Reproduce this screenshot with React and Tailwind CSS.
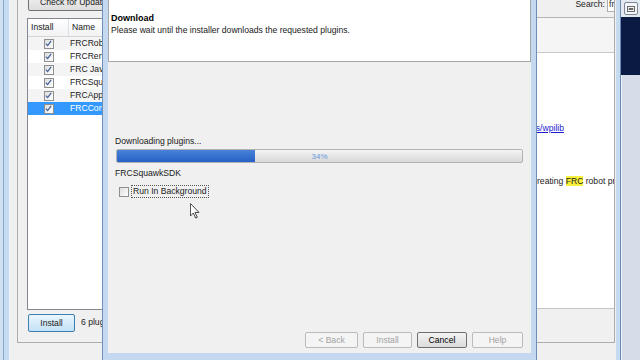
import React from 'react';

const plugins = [
  { name: 'FRCRobotBuilder' },
  { name: 'FRCRenameProject' },
  { name: 'FRC JavaDocs' },
  { name: 'FRCSquawkSDK' },
  { name: 'FRCApplications' },
  { name: 'FRCCompilerTools', selected: true },
];

function CheckBox({ checked }) {
  return (
    <span className="w-[10px] h-[10px] border border-[#8e8f8f] bg-gradient-to-br from-[#dedede] to-white flex items-center justify-center">
      {checked && (
        <svg viewBox="0 0 8 8" className="w-[7px] h-[7px]">
          <path d="M1 4.2 L3 6.5 L7 1" stroke="#3d5a98" strokeWidth="1.3" fill="none" />
        </svg>
      )}
    </span>
  );
}

function DialogButton({ label, disabled, width }) {
  return (
    <div
      className={
        'h-[16px] rounded-[2px] border flex items-center justify-center text-[8.6px] ' +
        width +
        (disabled
          ? ' border-[#b8bcbf] bg-[#f4f4f4] text-[#a3a3a3]'
          : ' border-[#707070] bg-gradient-to-b from-[#f3f3f3] to-[#dcdcdc] text-black')
      }
    >
      {label}
    </div>
  );
}

export default function App() {
  return (
    <div className="relative w-[640px] h-[360px] overflow-hidden bg-[#f0f0f0] text-[#1a1a1a] font-['Liberation_Sans',Arial,sans-serif] text-[8.6px] leading-[11px]">
      {/* background Plugins window */}
      <div className="flex h-full">
        {/* left frame */}
        <div className="w-[10px] flex shrink-0">
          <div className="w-[3px] bg-[#cfe0f2]" />
          <div className="w-px bg-[#8aa6c8]" />
          <div className="w-[5px] bg-[#c6daf0]" />
          <div className="w-px bg-[#eef3f8]" />
        </div>

        <div className="w-[606px] shrink-0 pl-[7px] pr-px pb-[17px]">
          <div className="h-full border-x border-b border-[#adadad] flex flex-col">
            {/* top bar */}
            <div className="h-[17px] flex justify-between items-start">
              <div className="ml-[10px] -mt-[6px] h-[17px] px-[11px] rounded-[2px] border border-[#707070] bg-gradient-to-b from-[#f2f2f2] to-[#dddddd] flex items-end pb-[2px] whitespace-nowrap">
                Check for Updates
              </div>
              <div className="flex items-start">
                <span className="mt-[-1px] mr-[2px]">Search:</span>
                <div className="w-[7px] h-[13px] -mt-[1px] border-l border-b border-[#abadb3] bg-white overflow-hidden pl-[1px]">
                  fr
                </div>
              </div>
            </div>

            <div className="flex-1 flex">
              {/* plugin list column */}
              <div className="w-[300px] pl-[9px] flex flex-col">
                <div className="mt-px flex-1 border border-[#828790] bg-white">
                  <div className="h-[18px] flex border-b border-[#d5d5d5] bg-gradient-to-b from-white to-[#f1f2f4]">
                    <div className="w-[41px] border-r border-[#dedfe2] pl-[3px] flex items-center">Install</div>
                    <div className="pl-[3px] flex items-center">Name</div>
                  </div>
                  {plugins.map((p, i) => (
                    <div
                      key={p.name}
                      className={
                        'h-[13px] flex items-center ' +
                        (p.selected ? 'bg-[#3399ff] text-white' : i % 2 === 0 ? 'bg-[#f4f4f4]' : 'bg-white')
                      }
                    >
                      <div className="w-[41px] flex justify-center">
                        <CheckBox checked />
                      </div>
                      <div className="pl-px whitespace-nowrap">{p.name}</div>
                    </div>
                  ))}
                </div>
                <div className="h-[32px] flex items-start pt-[4px]">
                  <div className="ml-px w-[47px] h-[18px] rounded-[2px] border border-[#3c7fb1] bg-gradient-to-b from-[#eaf6fd] to-[#c2e1f7] flex items-center justify-center">
                    Install
                  </div>
                  <span className="ml-[6px] mt-[3px] whitespace-nowrap">6 plugins selected, 16 MB</span>
                </div>
              </div>

              {/* details column */}
              <div className="flex-1 flex flex-col border-t border-[#b5b5b5] overflow-hidden">
                <div className="h-[35px] bg-[#f5f5f5] border-b border-[#c8c8c8]" />
                <div className="flex-1 bg-white pt-[70px]">
                  <div className="flex justify-end pr-[50px] whitespace-nowrap">
                    <span className="text-[#1b1bd0] underline">http://firstforge.wpi.edu/sf/projects/wpilib</span>
                  </div>
                  <div className="mt-[42px] flex whitespace-nowrap">
                    <span className="w-[219px] shrink-0 text-right overflow-hidden">A plugin with templates for c</span>
                    <span>
                      reating <span className="bg-[#f7f03c]">FRC</span> robot projects
                    </span>
                  </div>
                </div>
                <div className="h-[34px] bg-[#f0f0f0] border-t border-[#c6c6c6]" />
              </div>
            </div>
          </div>
        </div>

        {/* right frame */}
        <div className="w-[4px] shrink-0 bg-[#c6dbf0]" />
        <div className="w-px shrink-0 bg-[#6b8bb5]" />

        {/* side strip */}
        <div className="w-[19px] shrink-0 flex flex-col bg-[#d6dde8]">
          <div className="h-[17px] bg-[#e4e9f0] flex items-center justify-center">
            <div className="w-[14px] h-[13px] rounded-[2px] border border-[#7c8797] bg-[#f3f5f8] flex items-center justify-center">
              <svg viewBox="0 0 10 8" className="w-[8px] h-[6px]">
                <rect x="0.5" y="0.5" width="9" height="7" fill="none" stroke="#3c3c3c" />
                <rect x="2" y="3" width="6" height="2" fill="#3c3c3c" />
              </svg>
            </div>
          </div>
          <div className="h-[58px] bg-[#0b1a42]" />
          <div className="flex-1 border-l border-[#eef2f7]" />
        </div>
      </div>

      {/* Download dialog */}
      <div className="absolute left-[102px] top-0 w-[435px] h-[360px] bg-[#c4d9ef] border-x border-[#6d8fb8] px-[5px] pb-[7px] flex flex-col">
        <div className="h-[62px] bg-white border-x border-b border-[#a7a7a7] pl-[2px] pt-[13px]">
          <div className="font-bold text-[9px] leading-[11px] text-black">Download</div>
          <div className="leading-[12px]">Please wait until the installer downloads the requested plugins.</div>
        </div>
        <div className="flex-1 bg-[#f0f0f0] flex flex-col pl-[7px] pr-[8px] pb-[5px]">
          <div className="mt-[74px]">Downloading plugins...</div>
          <div className="ml-px mt-[2px] h-[14px] rounded-[2px] border border-[#b2b2b2] bg-gradient-to-b from-[#f4f4f4] to-[#d9d9d9] relative overflow-hidden">
            <div className="h-full w-[34%] bg-gradient-to-b from-[#4a82d8] to-[#2561c6]" />
            <div className="absolute inset-0 flex items-center justify-center text-[8px] text-[#6a98dc]">34%</div>
          </div>
          <div className="mt-[5px]">FRCSquawkSDK</div>
          <div className="mt-[6px] h-[13px] flex items-center">
            <div className="ml-[4px]">
              <CheckBox />
            </div>
            <span className="ml-[2px] px-px border border-dotted border-[#555] leading-[11px]">Run In Background</span>
          </div>
          <div className="flex-1" />
          <div className="flex justify-end gap-[5px]">
            <DialogButton label="< Back" disabled width="w-[53px]" />
            <DialogButton label="Install" disabled width="w-[49px]" />
            <DialogButton label="Cancel" width="w-[50px]" />
            <DialogButton label="Help" disabled width="w-[51px]" />
          </div>
        </div>
      </div>

      {/* mouse pointer */}
      <svg viewBox="0 0 12 19" className="absolute left-[190px] top-[203px] w-[10px] h-[16px]">
        <path d="M0.5 0.5 L0.5 15.5 L4 12 L6.8 18 L8.8 17 L6 11.2 L10.8 11.2 Z" fill="white" stroke="#222" strokeWidth="1" />
      </svg>
    </div>
  );
}
